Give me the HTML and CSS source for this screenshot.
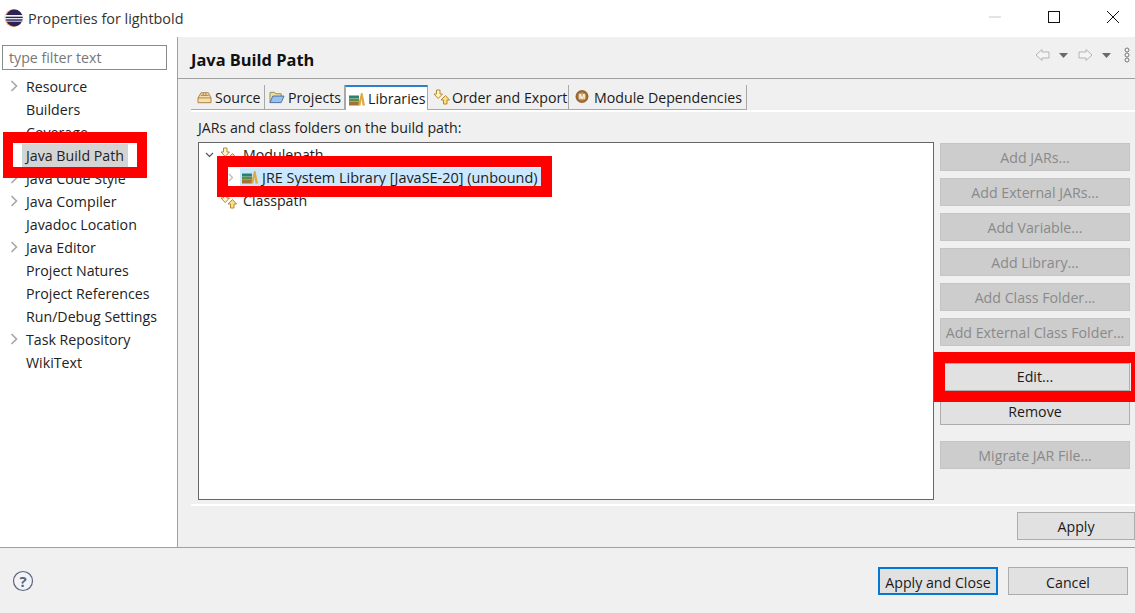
FILE: index.html
```html
<!DOCTYPE html>
<html lang="en">
<head>
<meta charset="utf-8">
<title>Properties for lightbold</title>
<link rel="stylesheet" href="styles.css">
</head>
<body>
<div class="window">
  <header class="titlebar">
    <svg class="logo" width="20" height="20" viewBox="0 0 20 20"><circle cx="9.500" cy="10" r="9" fill="#e8a860"/><circle cx="10.300" cy="10" r="8.500" fill="#2c2255"/><rect x="0" y="7" width="20" height="1.700" fill="#f2f2f6"/><rect x="0" y="10" width="20" height="1.300" fill="#e8e8f0"/><rect x="1" y="12.700" width="18" height="1" fill="#d8d8e6"/></svg>
    <span class="title">Properties for lightbold</span>
    <div class="winctl">
      <svg width="14" height="14" viewBox="0 0 14 14"><path d="M1 7h12" stroke="#c8c8c8" stroke-width="1"/></svg>
      <svg width="14" height="14" viewBox="0 0 14 14"><rect x="1.500" y="1.500" width="11" height="11" fill="none" stroke="#111" stroke-width="1"/></svg>
      <svg width="14" height="14" viewBox="0 0 14 14"><path d="M1 1l12 12M13 1L1 13" stroke="#111" stroke-width="1"/></svg>
    </div>
  </header>
  <div class="main">
    <aside class="sidebar">
      <div class="filter">type filter text</div>
      <ul class="navtree">
        <li class="navrow"><span class="chev"><svg width="8" height="12" viewBox="0 0 8 12"><path d="M1.500 1l5 5-5 5" fill="none" stroke="#a6a6a6" stroke-width="1.600"/></svg></span>Resource</li>
        <li class="navrow"><span class="chev"></span>Builders</li>
        <li class="navrow"><span class="chev"></span>Coverage</li>
        <li class="navrow"><span class="chev"></span><span class="navsel">Java Build Path</span></li>
        <li class="navrow"><span class="chev"><svg width="8" height="12" viewBox="0 0 8 12"><path d="M1.500 1l5 5-5 5" fill="none" stroke="#a6a6a6" stroke-width="1.600"/></svg></span>Java Code Style</li>
        <li class="navrow"><span class="chev"><svg width="8" height="12" viewBox="0 0 8 12"><path d="M1.500 1l5 5-5 5" fill="none" stroke="#a6a6a6" stroke-width="1.600"/></svg></span>Java Compiler</li>
        <li class="navrow"><span class="chev"></span>Javadoc Location</li>
        <li class="navrow"><span class="chev"><svg width="8" height="12" viewBox="0 0 8 12"><path d="M1.500 1l5 5-5 5" fill="none" stroke="#a6a6a6" stroke-width="1.600"/></svg></span>Java Editor</li>
        <li class="navrow"><span class="chev"></span>Project Natures</li>
        <li class="navrow"><span class="chev"></span>Project References</li>
        <li class="navrow"><span class="chev"></span>Run/Debug Settings</li>
        <li class="navrow"><span class="chev"><svg width="8" height="12" viewBox="0 0 8 12"><path d="M1.500 1l5 5-5 5" fill="none" stroke="#a6a6a6" stroke-width="1.600"/></svg></span>Task Repository</li>
        <li class="navrow"><span class="chev"></span>WikiText</li>
      </ul>
    </aside>
    <section class="content">
      <div class="pagehead">
        <h1 class="pagetitle">Java Build Path</h1>
        <div class="navicons">
          <svg width="15" height="14" viewBox="0 0 15 14"><path d="M1 7l6-5.500V4h7v6H7v2.500z" fill="#f4f4f4" stroke="#b4b4b4"/></svg>
          <svg class="drop" width="9" height="5" viewBox="0 0 9 5"><path d="M0 0h9L4.500 5z" fill="#6a6a6a"/></svg>
          <svg class="fwd" width="15" height="14" viewBox="0 0 15 14"><path d="M14 7L8 1.500V4H1v6h7v2.500z" fill="#f4f4f4" stroke="#b4b4b4"/></svg>
          <svg class="drop" width="9" height="5" viewBox="0 0 9 5"><path d="M0 0h9L4.500 5z" fill="#6a6a6a"/></svg>
          <svg class="dots" width="6" height="16" viewBox="0 0 6 16"><g fill="#f4f4f4" stroke="#777"><circle cx="3" cy="3" r="2"/><circle cx="3" cy="8" r="2"/><circle cx="3" cy="13" r="2"/></g></svg>
        </div>
      </div>
      <div class="tabbar">
        <div class="tab tab-source">
          <svg width="15" height="13" viewBox="0 0 17 15"><path d="M1 8l3.500-6h8.500l3 6v5.500H1z" fill="#f6dfae" stroke="#a5753a"/><path d="M1 8h15M4 5h9.500M7 2v3M10 2v3" stroke="#a5753a" fill="none"/></svg>
          Source</div>
        <div class="tab tab-projects">
          <svg width="16" height="14" viewBox="0 0 17 15"><path d="M1 13.500V2.500h5l1 1.500h6v3" fill="#f3dc94" stroke="#8a8a6a"/><path d="M1 13.500l3-7h12l-3 7z" fill="#9cc0e8" stroke="#3f6fa8"/></svg>
          Projects</div>
        <div class="tab tab-active">
          <svg width="16" height="14" viewBox="0 0 16 14"><rect x="0" y="3.500" width="10" height="3" fill="#2a7f7a"/><rect x="0" y="6.700" width="10" height="3" fill="#5f8f3a"/><rect x="0" y="10" width="10" height="3.500" fill="#a5713a"/><path d="M9 13.500L12 1h1.500L16 13.500h-2.500L12.500 7 11.500 13.500z" fill="#e0a93e"/></svg>
          Libraries</div>
        <div class="tab tab-order">
          <svg width="17" height="16" viewBox="0 0 17 16"><path d="M3.500 1H7v4h2.500L5.200 9.500 1 5h2.500z" fill="#fdf3cf" stroke="#b88a2e"/><path d="M12.500 6.500l4 4.500H14v4h-3.500v-4H8z" fill="#fbdf85" stroke="#b88a2e"/></svg>
          Order and Export</div>
        <div class="tab tab-module">
          <svg width="14" height="14" viewBox="0 0 14 14"><circle cx="7" cy="6.500" r="6.500" fill="#9a6a35"/><circle cx="7" cy="6.500" r="4" fill="#c89a62"/><text class="micon" x="7" y="9" text-anchor="middle">M</text></svg>
          Module Dependencies</div>
      </div>
      <div class="panel">
        <div class="panel-label">JARs and class folders on the build path:</div>
        <div class="panel-body">
          <div class="cptree">
            <div class="cprow cp-l1"><svg class="cptw" width="9" height="6" viewBox="0 0 9 6"><path d="M1 1l3.500 3.500L8 1" fill="none" stroke="#555" stroke-width="1.200"/></svg><svg width="17" height="16" viewBox="0 0 17 16"><path d="M3.500 1H7v4h2.500L5.200 9.500 1 5h2.500z" fill="#fdf3cf" stroke="#b88a2e"/><path d="M12.500 6.500l4 4.500H14v4h-3.500v-4H8z" fill="#fbdf85" stroke="#b88a2e"/></svg><span>Modulepath</span></div>
            <div class="cprow cp-l2"><svg class="cptw2" width="6" height="9" viewBox="0 0 6 9"><path d="M1 1l3.500 3.500L1 8" fill="none" stroke="#bbb" stroke-width="1.200"/></svg><span class="cpsel"><svg width="16" height="14" viewBox="0 0 16 14"><rect x="0" y="3.500" width="10" height="3" fill="#2a7f7a"/><rect x="0" y="6.700" width="10" height="3" fill="#5f8f3a"/><rect x="0" y="10" width="10" height="3.500" fill="#a5713a"/><path d="M9 13.500L12 1h1.500L16 13.500h-2.500L12.500 7 11.500 13.500z" fill="#e0a93e"/></svg><span class="jre">JRE System Library [JavaSE-20] (unbound)</span></span></div>
            <div class="cprow cp-l3"><svg width="17" height="16" viewBox="0 0 17 16"><path d="M3.500 1H7v4h2.500L5.200 9.500 1 5h2.500z" fill="#fdf3cf" stroke="#b88a2e"/><path d="M12.500 6.500l4 4.500H14v4h-3.500v-4H8z" fill="#fbdf85" stroke="#b88a2e"/></svg><span>Classpath</span></div>
          </div>
          <div class="btncol">
            <button class="btn" disabled>Add JARs...</button>
            <button class="btn" disabled>Add External JARs...</button>
            <button class="btn" disabled>Add Variable...</button>
            <button class="btn" disabled>Add Library...</button>
            <button class="btn" disabled>Add Class Folder...</button>
            <button class="btn" disabled>Add External Class Folder...</button>
            <button class="btn btn-edit">Edit...</button>
            <button class="btn btn-remove">Remove</button>
            <button class="btn btn-migrate" disabled>Migrate JAR File...</button>
          </div>
        </div>
      </div>
      <div class="applyrow"><button class="btn btn-apply">Apply</button></div>
    </section>
  </div>
  <footer class="footer">
    <svg width="22" height="22" viewBox="0 0 22 22"><circle cx="11" cy="11" r="9.500" fill="#f2f3f7" stroke="#5c6380" stroke-width="1.200"/><text class="helpq" x="11" y="16.500" text-anchor="middle">?</text></svg>
    <div class="footer-btns">
      <button class="btn btn-foot btn-default">Apply and Close</button>
      <button class="btn btn-foot btn-cancel">Cancel</button>
    </div>
  </footer>
  <div class="mark mark-nav"></div>
  <div class="mark mark-jre"></div>
  <div class="mark mark-edit"></div>
</div>
</body>
</html>
```
FILE: styles.css
```css
* { box-sizing: border-box; }
html, body { margin: 0; padding: 0; }
body { width: 1135px; height: 613px; overflow: hidden; font-family: "Open Sans", "Noto Sans", sans-serif; font-size: 14.2px; color: #1a1a1a; }
.window { position: relative; width: 1135px; height: 613px; display: flex; flex-direction: column; background: #f0f0f0; }
.titlebar { height: 37px; background: #fff; display: flex; align-items: center; padding: 0 0 1px 4px; flex: none; }
.logo { margin-right: 4px; flex: none; }
.title { color: #333; font-size: 14.4px; }
.winctl { margin-left: auto; display: flex; gap: 45px; padding: 0 15px 2px 0; }
.main { flex: 1; display: flex; min-height: 0; }
.sidebar { width: 178px; background: #fff; border-right: 1px solid #a0a0a0; padding: 8px 0 0 2px; flex: none; }
.filter { width: 165px; height: 25px; border: 1px solid #8a8a8a; padding-left: 6px; line-height: 23px; color: #777; }
.navtree { list-style: none; margin: 5px 0 0; padding: 0; }
.navrow { height: 23px; line-height: 23px; display: flex; white-space: nowrap; color: #222; }
.chev { width: 24px; padding: 5px 0 0 8px; flex: none; }
.chev svg { display: block; }
.navsel { background: #d4d4d4; padding: 0 4px; margin-left: -4px; }
.content { flex: 1; display: flex; flex-direction: column; min-width: 0; }
.pagehead { height: 42px; flex: none; display: flex; align-items: center; padding: 3px 5px 0 13px; border-bottom: 1px solid #a0a0a0; }
.pagetitle { margin: 0; font-size: 16.4px; font-weight: 700; color: #111; }
.navicons { margin-left: auto; display: flex; align-items: center; gap: 9px; margin-top: -8px; }
.fwd { margin-left: 1px; }
.dots { margin-left: 4px; }
.tabbar { height: 31px; flex: none; display: flex; margin-left: 13px; padding-top: 6px; align-items: stretch; }
.tab { display: flex; align-items: center; gap: 2px; border-right: 1px solid #a8a8a8; border-bottom: 1px solid #a8a8a8; padding: 0 3px 0 5px; white-space: nowrap; height: 25px; }
.tab svg { flex: none; }
.tab-source { width: 74px; padding-left: 6px; gap: 3px; }
.tab-projects { width: 80px; padding-left: 4px; gap: 3px; }
.tab-active { width: 83px; background: #fff; border-top: 2px solid #2f80c8; border-left: 1px solid #a8a8a8; border-bottom: 0; padding-left: 3px; gap: 3px; }
.tab-order { width: 141px; padding-left: 5px; gap: 2px; }
.tab-module { width: 178px; gap: 5px; padding-left: 6px; }
.micon { font-size: 7px; font-weight: 700; fill: #fff; }
.panel { height: 396px; flex: none; margin-left: 13px; border-bottom: 2px solid #fff; border-top: 2px solid #fff; display: flex; flex-direction: column; padding: 7px 5px 0 7px; }
.panel-label { height: 23px; line-height: 18px; color: #222; }
.panel-body { display: flex; gap: 6px; flex: 1; padding-bottom: 4px; }
.cptree { width: 736px; height: 358px; background: #fff; border: 1px solid #666; flex: none; }
.cprow { height: 23px; display: flex; align-items: center; white-space: nowrap; color: #222; }
.cp-l1 { padding-left: 6px; }
.cptw { margin-right: 6px; }
.cp-l2 { padding-left: 29px; }
.cptw2 { margin-right: 6px; }
.cpsel { background: #cce8ff; display: flex; align-items: center; gap: 4px; padding: 0 3px 1px 2px; height: 19px; }
.jre { font-size: 14.45px; }
.cp-l3 { padding-left: 21px; }
.cprow svg { flex: none; }
.cp-l1 span, .cp-l3 span { margin-left: 6px; }
.btncol { width: 190px; display: flex; flex-direction: column; gap: 7px; padding-top: 1px; flex: none; }
.btn { height: 28px; background: #e1e1e1; border: 1px solid #adadad; font: inherit; color: #1a1a1a; padding: 0; flex: none; }
.btn:disabled { background: #cdcdcd; border-color: #c4c4c4; color: #8a8a8a; }
.btn-edit { margin-top: 10px; padding-bottom: 2px; }
.btn-remove { margin-top: -1px; }
.btn-migrate { margin-top: 9px; }
.applyrow { flex: none; display: flex; justify-content: flex-end; padding-top: 6px; }
.btn-apply { width: 118px; padding-top: 1px; }
.footer { height: 66px; flex: none; border-top: 1px solid #a0a0a0; display: flex; align-items: center; padding: 0 7px 0 12px; }
.helpq { font-size: 15px; font-weight: 700; fill: #5c6380; }
.footer-btns { margin-left: auto; display: flex; gap: 10px; }
.btn-foot { width: 120px; line-height: 24px; }
.btn-cancel { padding-top: 3px; }
.btn-default { border: 2px solid #0078d7; padding-top: 2px; }
.mark { position: absolute; border-style: solid; border-color: #ff0000; pointer-events: none; }
.mark-nav { left: 3px; top: 132px; width: 144px; height: 46px; border-width: 11px 10px; }
.mark-jre { left: 217px; top: 156px; width: 335px; height: 41px; border-width: 11px; }
.mark-edit { left: 934px; top: 352px; width: 201px; height: 50px; border-width: 11px 4px 11px 11px; }
```
